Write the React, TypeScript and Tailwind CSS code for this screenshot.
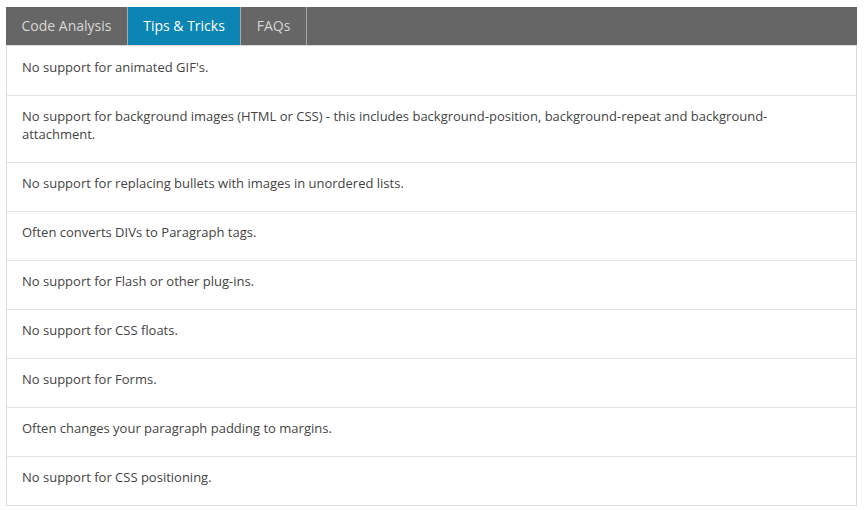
import React from 'react';

const tips = [
  "No support for animated GIF's.",
  'No support for background images (HTML or CSS) - this includes background-position, background-repeat and background-attachment.',
  'No support for replacing bullets with images in unordered lists.',
  'Often converts DIVs to Paragraph tags.',
  'No support for Flash or other plug-ins.',
  'No support for CSS floats.',
  'No support for Forms.',
  'Often changes your paragraph padding to margins.',
  'No support for CSS positioning.',
];

const tabs = [
  { label: 'Code Analysis', width: 'w-[122px]', active: false },
  { label: 'Tips & Tricks', width: 'w-[113px]', active: true },
  { label: 'FAQs', width: 'w-[66px]', active: false },
];

export default function App() {
  return (
    <div className="min-h-[510px] bg-white pt-[7px] pl-[6px] font-['Open_Sans',sans-serif]">
      <div className="w-[851px]">
        <div className="flex h-[38px] bg-[#666666]">
          {tabs.map((tab) => (
            <div
              key={tab.label}
              className={
                tab.active
                  ? `${tab.width} flex items-center justify-center border-r border-[#a9a9a9] bg-[#0a85b4] pb-[2px] text-[14px] text-white`
                  : `${tab.width} flex items-center justify-center border-r border-[#a9a9a9] pb-[2px] text-[14px] text-[#d6d6d6]`
              }
            >
              {tab.label}
            </div>
          ))}
        </div>
        <div className="border border-[#dcdcdc]">
          {tips.map((tip, i) => (
            <div
              key={i}
              className={
                i === 0
                  ? 'border-b border-[#e2e2e2] pl-[15px] pr-[60px] pt-[12px] pb-[19px] text-[13px] leading-[18px] text-[#444444]'
                  : i === tips.length - 1
                    ? 'pl-[15px] pr-[60px] pt-[11px] pb-[19px] text-[13px] leading-[18px] text-[#444444]'
                    : 'border-b border-[#e2e2e2] pl-[15px] pr-[60px] pt-[11px] pb-[19px] text-[13px] leading-[18px] text-[#444444]'
              }
            >
              {tip}
            </div>
          ))}
        </div>
      </div>
    </div>
  );
}
